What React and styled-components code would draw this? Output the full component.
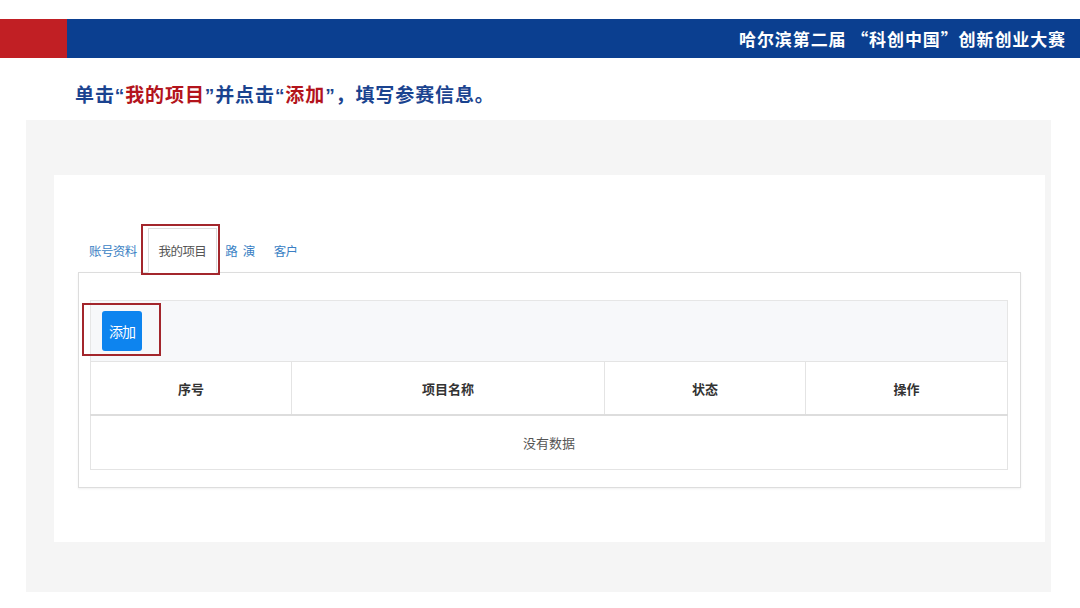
import React from "react";
import styled, { createGlobalStyle } from "styled-components";

const GlobalStyle = createGlobalStyle`
  html, body {
    margin: 0;
    padding: 0;
    background: #fff;
    font-family: "Noto Sans CJK SC", "Noto Sans", sans-serif;
  }
`;

const Page = styled.div`
  width: 1080px;
  height: 608px;
  overflow: hidden;
  padding-top: 19px;
  box-sizing: border-box;
`;

const Banner = styled.header`
  height: 39px;
  display: flex;
  background: #0b3f90;
`;

const RedBlock = styled.div`
  width: 67px;
  background: #c11f24;
`;

const BannerTitle = styled.h2`
  flex: 1;
  margin: 0;
  padding-right: 14px;
  display: flex;
  align-items: center;
  justify-content: flex-end;
  color: #fff;
  font-size: 17px;
  font-weight: 700;
  letter-spacing: 0.9px;
`;

const Headline = styled.h1`
  margin: 0;
  padding: 23px 0 0 75px;
  height: 39px;
  font-family: "Liberation Sans", "Noto Sans CJK SC", sans-serif;
  font-size: 19px;
  font-weight: 700;
  color: #1a438f;
  line-height: 30px;
  letter-spacing: 0.9px;
`;

const Red = styled.span`
  color: #b3141c;
`;

const Backdrop = styled.section`
  margin-left: 26px;
  width: 1025px;
  height: 472px;
  background: #f5f5f5;
  padding: 55px 6px 0 28px;
  box-sizing: border-box;
`;

const Card = styled.div`
  background: #fff;
  height: 367px;
  padding: 52px 24px 0 24px;
  box-sizing: border-box;
`;

const Tabs = styled.ul`
  list-style: none;
  margin: 0;
  padding: 0;
  display: flex;
  align-items: flex-end;
  height: 45px;
`;

const Tab = styled.li`
  position: relative;
  font-size: 12.5px;
  letter-spacing: -0.6px;
  white-space: pre;
  height: 45px;
  line-height: 43px;
  padding: 0 ${(p) => p.$pad ?? 10}px;
  box-sizing: border-box;
  color: ${(p) => (p.$active ? "#555" : "#3a7fc4")};
  background: ${(p) => (p.$active ? "#fff" : "transparent")};
  border: 1px solid ${(p) => (p.$active ? "#ddd" : "transparent")};
  border-bottom-color: ${(p) => (p.$active ? "#fff" : "transparent")};
  margin-bottom: -1px;
  z-index: 1;
`;

const Highlight = styled.span`
  position: absolute;
  left: ${(p) => p.$l}px;
  top: ${(p) => p.$t}px;
  right: ${(p) => p.$r}px;
  bottom: ${(p) => p.$b}px;
  border: 2px solid #a3262c;
  pointer-events: none;
`;

const TabPanel = styled.div`
  border: 1px solid #ddd;
  height: 216px;
  padding: 27px 12px 0 11px;
  box-sizing: border-box;
  box-shadow: 0 1px 2px rgba(0, 0, 0, 0.06);
`;

const Toolbar = styled.div`
  position: relative;
  height: 61px;
  background: #f7f8fa;
  border: 1px solid #e6e6e6;
  border-bottom: none;
  padding: 10px 11px;
  box-sizing: border-box;
`;

const AddButton = styled.button`
  width: 40px;
  height: 40px;
  border: none;
  border-radius: 3px;
  background: #0d84ef;
  color: #fff;
  font-family: inherit;
  font-size: 14px;
  letter-spacing: -1px;
  padding: 0;
`;

const Table = styled.table`
  width: 100%;
  border-collapse: collapse;
  font-size: 13px;
  color: #333;
`;

const Th = styled.th`
  height: 52px;
  padding: 0;
  border: 1px solid #e4e4e4;
  border-bottom: 2px solid #ddd;
  font-weight: 700;
  width: ${(p) => p.$w}px;
`;

const Td = styled.td`
  height: 53px;
  padding: 0;
  border: 1px solid #e4e4e4;
  text-align: center;
  color: #555;
`;

export default function App() {
  return (
    <>
      <GlobalStyle />
      <Page>
        <Banner>
          <RedBlock />
          <BannerTitle>哈尔滨第二届 “科创中国”创新创业大赛</BannerTitle>
        </Banner>
        <Headline>
          单击“<Red>我的项目</Red>”并点击“<Red>添加</Red>”，填写参赛信息。
        </Headline>
        <Backdrop>
          <Card>
            <Tabs>
              <Tab>账号资料</Tab>
              <Tab $active>
                我的项目
                <Highlight $l={-8} $t={-5} $r={-4} $b={-3} />
              </Tab>
              <Tab $pad={7}>路{"\u2002"}演</Tab>
              <Tab $pad={10}>客户</Tab>
            </Tabs>
            <TabPanel>
              <Toolbar>
                <AddButton>添加</AddButton>
                <Highlight $l={-9} $t={2} $r={846} $b={5} />
              </Toolbar>
              <Table>
                <thead>
                  <tr>
                    <Th $w={201}>序号</Th>
                    <Th $w={314}>项目名称</Th>
                    <Th $w={201}>状态</Th>
                    <Th $w={202}>操作</Th>
                  </tr>
                </thead>
                <tbody>
                  <tr>
                    <Td colSpan={4}>没有数据</Td>
                  </tr>
                </tbody>
              </Table>
            </TabPanel>
          </Card>
        </Backdrop>
      </Page>
    </>
  );
}
